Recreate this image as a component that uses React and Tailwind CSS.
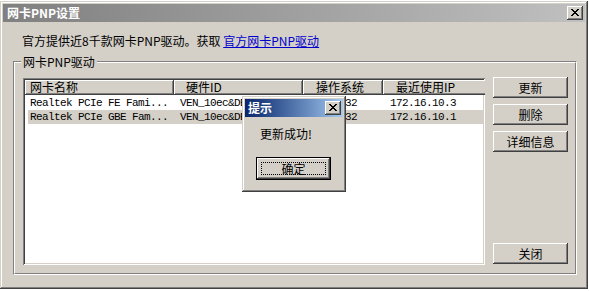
const frame =
  "shadow-[inset_-1px_-1px_#404040,inset_1px_1px_#d4d0c8,inset_-2px_-2px_#808080,inset_2px_2px_#ffffff]";
const raised =
  "shadow-[inset_-1px_-1px_#404040,inset_1px_1px_#ffffff,inset_-2px_-2px_#808080,inset_2px_2px_#d4d0c8]";
const sunken =
  "shadow-[inset_1px_1px_#808080,inset_-1px_-1px_#ffffff,inset_2px_2px_#404040,inset_-2px_-2px_#d4d0c8]";
const headerCell =
  "shadow-[inset_-1px_-1px_#404040,inset_1px_1px_#ffffff,inset_-2px_-2px_#808080]";

function XGlyph() {
  const px = [
    [0, 0], [1, 0], [6, 0], [7, 0],
    [1, 1], [2, 1], [5, 1], [6, 1],
    [2, 2], [3, 2], [4, 2], [5, 2],
    [3, 3], [4, 3],
    [2, 4], [3, 4], [4, 4], [5, 4],
    [1, 5], [2, 5], [5, 5], [6, 5],
    [0, 6], [1, 6], [6, 6], [7, 6],
  ];
  return (
    <svg width="8" height="7" viewBox="0 0 8 7" shapeRendering="crispEdges">
      {px.map(([x, y]) => (
        <rect key={`${x}-${y}`} x={x} y={y} width="1" height="1" fill="#000" />
      ))}
    </svg>
  );
}

function CloseBtn() {
  return (
    <div className={`flex h-[14px] w-[16px] items-center justify-center bg-[#d4d0c8] pb-[1px] pr-[1px] ${raised}`}>
      <XGlyph />
    </div>
  );
}

function Button({ children, className = "" }) {
  return (
    <div
      className={`flex h-[21px] w-[75px] items-center justify-center bg-[#d4d0c8] ${raised} ${className}`}
    >
      {children}
    </div>
  );
}

const rows = [
  {
    name: "Realtek PCIe FE Fami...",
    id: "VEN_10ec&DEV_8136",
    os: "WinXP_32",
    ip: "172.16.10.3",
    sel: false,
  },
  {
    name: "Realtek PCIe GBE Fam...",
    id: "VEN_10ec&DEV_8168",
    os: "WinXP_32",
    ip: "172.16.10.1",
    sel: true,
  },
];

export default function App() {
  return (
    <div className="relative h-[291px] w-[589px] overflow-hidden bg-white font-['Noto_Sans_CJK_SC',sans-serif] text-[12px] leading-[14px] text-black">
      {/* main window */}
      <div className={`mt-[1px] flex h-[288px] w-[588px] flex-col bg-[#d4d0c8] p-[3px] ${frame}`}>
        <div className="flex h-[18px] items-center justify-between bg-linear-to-r from-[#808080] to-[#c0c0c0] pl-[4px] pr-[2px]">
          <span className="font-bold text-white">网卡PNP设置</span>
          <CloseBtn />
        </div>

        <div className="pl-[19px] pt-[12px]">
          官方提供近8千款网卡PNP驱动。获取{" "}
          <span className="text-[#0000cc] underline">官方网卡PNP驱动</span>
        </div>

        {/* group box */}
        <div className="relative ml-[10px] mt-[13px] h-[214px] w-[564px] border border-b-white border-l-[#808080] border-r-white border-t-[#808080]">
          <div className="flex h-full w-full border border-b-[#808080] border-l-white border-r-[#808080] border-t-white pb-[8px] pl-[8px] pt-[14px]">
            {/* list view */}
            <div className={`mt-[1px] h-[187px] w-[462px] shrink-0 overflow-hidden bg-white p-[2px] ${sunken}`}>
              <div className="flex h-[15px] w-max bg-[#d4d0c8]">
                <div className={`w-[149px] shrink-0 pl-[5px] leading-[14px] ${headerCell}`}>网卡名称</div>
                <div className={`w-[129px] shrink-0 pl-[12px] leading-[14px] ${headerCell}`}>硬件ID</div>
                <div className={`w-[80px] shrink-0 pl-[13px] leading-[14px] ${headerCell}`}>操作系统</div>
                <div className={`w-[104px] shrink-0 pl-[13px] leading-[14px] ${headerCell}`}>最近使用IP</div>
              </div>
              <div className="pt-[1px] font-['Liberation_Mono',monospace] text-[11px] tracking-[-0.6px]">
                {rows.map((r) => (
                  <div
                    key={r.ip}
                    className={`ml-[3px] flex h-[14px] items-center whitespace-nowrap ${r.sel ? "bg-[#d4d0c8]" : ""}`}
                  >
                    <div className="w-[146px] shrink-0 pl-[2px]">{r.name}</div>
                    <div className="w-[129px] shrink-0 pl-[6px]">{r.id}</div>
                    <div className="w-[80px] shrink-0 pl-[6px]">{r.os}</div>
                    <div className="shrink-0 pl-[7px]">{r.ip}</div>
                  </div>
                ))}
              </div>
            </div>

            {/* buttons */}
            <div className="ml-[8px] flex flex-col gap-[6px]">
              <Button>更新</Button>
              <Button>删除</Button>
              <Button>详细信息</Button>
              <Button className="mb-[1px] mt-auto">关闭</Button>
            </div>
          </div>
          <div className="absolute left-[7px] top-[-7px] bg-[#d4d0c8] px-[2px]">网卡PNP驱动</div>
        </div>
      </div>

      {/* message box */}
      <div className={`absolute left-[242px] top-[96px] flex h-[96px] w-[104px] flex-col bg-[#d4d0c8] p-[3px] ${frame}`}>
        <div className="flex h-[18px] items-center justify-between bg-linear-to-r from-[#0a246a] to-[#a6caf0] pl-[3px] pr-[2px]">
          <span className="font-bold text-white">提示</span>
          <CloseBtn />
        </div>
        <div className="pl-[15px] pt-[10px]">更新成功!</div>
        <div className="ml-[11px] mt-[16px] h-[23px] w-[75px] border border-black">
          <div className={`flex h-full w-full items-center justify-center bg-[#d4d0c8] p-[4px] ${raised}`}>
            <div className="flex h-full w-full items-center justify-center border border-dotted border-black">
              确定
            </div>
          </div>
        </div>
      </div>
    </div>
  );
}
